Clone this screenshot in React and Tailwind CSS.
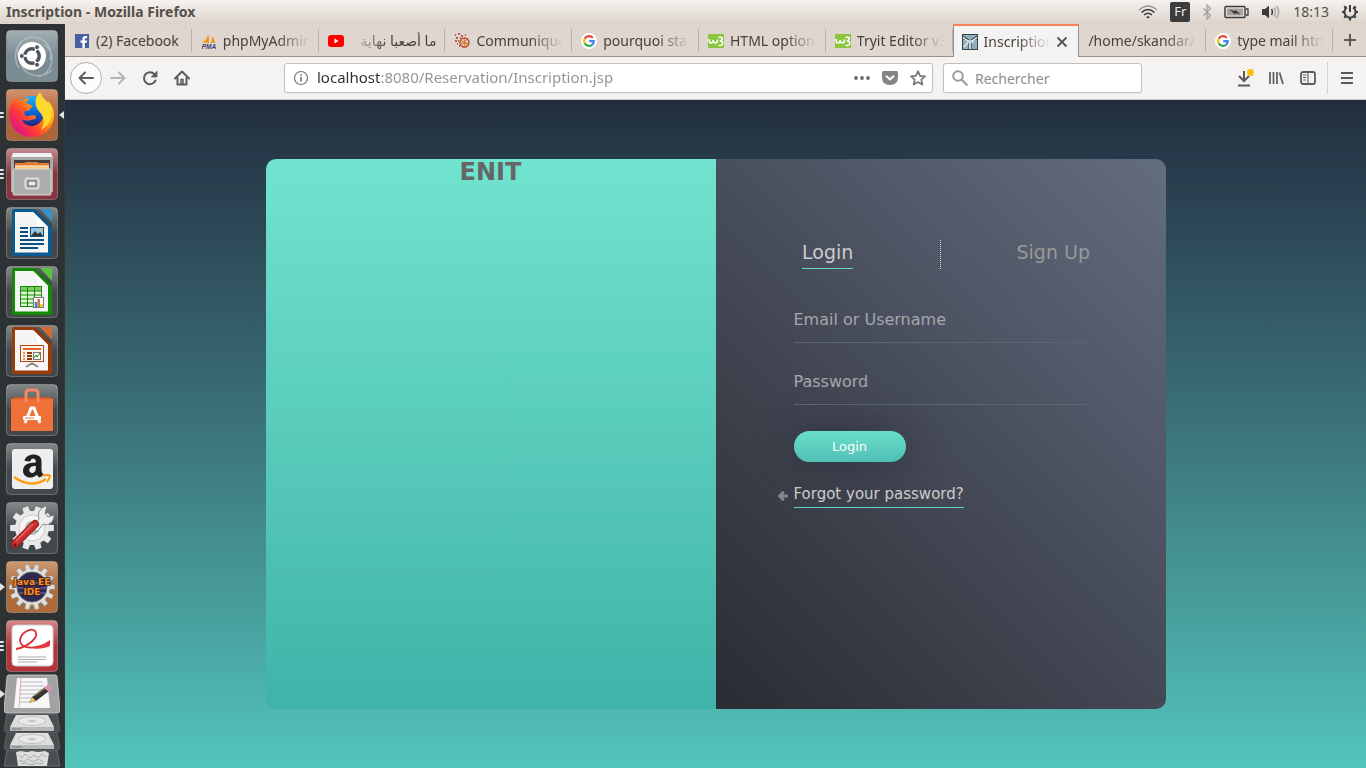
import React from "react";

/* ---------- Launcher icons ---------- */

const Tile = ({ from, to, children }) => {
  const id = React.useId();
  return (
    <svg viewBox="0 0 52 52" className="block size-[52px]" aria-hidden="true">
      <defs>
        <linearGradient id={id} x1="0" y1="0" x2="0" y2="1">
          <stop offset="0" stopColor={from} />
          <stop offset="0.5" stopColor={to} />
          <stop offset="1" stopColor={to} />
        </linearGradient>
      </defs>
      <rect x="0.5" y="0.5" width="51" height="51" rx="4" fill={`url(#${id})`} stroke="#fff" strokeOpacity="0.25" />
      {children}
    </svg>
  );
};

const gearPath = (cx, cy, r1, r2, n) => {
  const pts = [];
  for (let i = 0; i < n; i++) {
    const a = (i / n) * Math.PI * 2;
    const w = Math.PI / n;
    [[-0.62, r1], [-0.42, r2], [0.42, r2], [0.62, r1]].forEach(([k, r]) => {
      pts.push(`${(cx + Math.cos(a + k * w) * r).toFixed(2)} ${(cy + Math.sin(a + k * w) * r).toFixed(2)}`);
    });
  }
  return `M${pts.join("L")}Z`;
};

const DashIcon = () => (
  <Tile from="#a3b0b5" to="#7b8c93">
    <path d="M14 30C6 18 17 4 32 8c10 3 15 12 12 22M38 14c14 10 8 29-5 33M13 38C8 30 8 20 14 14M15 34c4 12 20 16 31 6" fill="none" stroke="#c2cccf" strokeOpacity="0.6" strokeWidth="1.6" />
    <circle cx="26" cy="26" r="14" fill="#fff" />
    <circle cx="26" cy="26" r="7.2" fill="none" stroke="#4b555a" strokeWidth="3.4" strokeDasharray="13 2.08" strokeDashoffset="6.5" />
    <g fill="#4b555a" stroke="#fff" strokeWidth="0.8">
      <circle cx="15.8" cy="26" r="2.4" />
      <circle cx="31" cy="17.2" r="2.4" />
      <circle cx="31" cy="34.8" r="2.4" />
    </g>
  </Tile>
);

const FirefoxIcon = () => (
  <Tile from="#d3936d" to="#b0643a">
    <defs>
      <linearGradient id="ffx" x1="0.95" y1="0.1" x2="0.1" y2="0.8">
        <stop offset="0" stopColor="#ffe226" />
        <stop offset="0.35" stopColor="#ff980e" />
        <stop offset="0.7" stopColor="#ff3b36" />
        <stop offset="1" stopColor="#e3108b" />
      </linearGradient>
      <linearGradient id="ffb" x1="0.5" y1="0" x2="0.5" y2="1">
        <stop offset="0" stopColor="#1ab4f8" />
        <stop offset="0.5" stopColor="#0868dd" />
        <stop offset="1" stopColor="#2b1a6b" />
      </linearGradient>
    </defs>
    <circle cx="26" cy="23" r="16" fill="url(#ffb)" />
    <path d="M10 8c-5 6-7 12-6.500 19C5 40 14 48 26 48c13 0 22-10 22-22 0-7-3-11-6-14-1 4-3 6-4 9 1 7-3 15-11 16-5 .5-10-2-11-7 3 2 6 2 9 1l4-1c2-1 1-4-2-4-3 0-4 2-7 1-2-1-2-4-1-5 2 0 4 0 5-1 0-2 1-2 3-4-2-1-4-2-7-3 1-2 2-4 4-5-4 0-7 1-9 3-3-1-4-2-5-4Z" fill="url(#ffx)" />
    <path d="M34 3c-5 5-6 12-2 18 4 5 9 10 3 20 10-5 14-16 8-26-3-4-7-6-9-12Z" fill="#ffd82e" />
  </Tile>
);

const FilesIcon = () => (
  <Tile from="#c08c92" to="#8a3340">
    <path d="M7 5h38l2 5H5Z" fill="#f1f1f1" />
    <rect x="5" y="9" width="42" height="35" rx="1" fill="#a9a9a9" />
    <rect x="8" y="12" width="36" height="10" fill="#443d3b" />
    <path d="M9 22v-7h9l2-1h12v1h11v7Z" fill="#e17a35" />
    <path d="M9 18h34v4H9Z" fill="#f6c77d" />
    <path d="M9 18h34" stroke="#fff2df" />
    <rect x="7" y="21" width="38" height="26" rx="1" fill="#adadad" stroke="#d8d8d8" />
    <rect x="19" y="30" width="14" height="11" rx="2" fill="#c6c6c6" stroke="#e6e6e6" />
    <rect x="22" y="33" width="8" height="5" fill="#eee" stroke="#4a4a4a" />
  </Tile>
);

const OfficeDoc = ({ dark, light, children }) => (
  <Tile from="#85898a" to="#43494b">
    <path d="M9 2h20l17 16v29a2 2 0 0 1-2 2H8a2 2 0 0 1-2-2V4a2 2 0 0 1 2-2Z" fill={dark} />
    <path d="M28 2h6l12 13v6Z" fill="#3a3f40" fillOpacity="0.55" />
    <path d="M34 2h11a1 1 0 0 1 1 1v12Z" fill={light} />
    <path d="M9 5h18l15 15v25.500H9Z" fill="#f5f5f5" />
    <path d="M27 5l15 15H31Z" fill="#fff" stroke="#d8d8d8" strokeWidth="0.5" />
    {children}
  </Tile>
);

const WriterIcon = () => (
  <OfficeDoc dark="#0b5a90" light="#3b8fc4">
    <path d="M14 21h8M14 25h8M14 29h8M14 33h24M14 37h24M14 41h18" stroke="#0b4f80" strokeWidth="2" />
    <rect x="24.500" y="20.500" width="13" height="9" fill="#90c8ee" stroke="#0b4f80" />
    <path d="M25 29l4-5 3 3 2-2 3 4Z" fill="#333" />
    <circle cx="35" cy="23" r="1.400" fill="#f0c62e" />
  </OfficeDoc>
);

const CalcIcon = () => (
  <OfficeDoc dark="#178a05" light="#56c43c">
    <rect x="14.500" y="20.500" width="21" height="20" fill="#dff5d5" stroke="#178a05" />
    <rect x="15" y="21" width="20" height="4" fill="#7ecb66" />
    <path d="M14 25h22M14 29h22M14 33h22M14 37h22M21.500 20v21M28.500 20v21" stroke="#178a05" />
    <rect x="27.500" y="31.500" width="10" height="10" fill="#fff" stroke="#777" />
    <path d="M30 41v-5" stroke="#1c8bd0" strokeWidth="2.500" />
    <path d="M32.700 41v-8" stroke="#e0702a" strokeWidth="2.500" />
    <path d="M35.500 41v-3" stroke="#eec31f" strokeWidth="2.500" />
  </OfficeDoc>
);

const ImpressIcon = () => (
  <OfficeDoc dark="#9a3c0a" light="#d06a36">
    <rect x="14.500" y="20.500" width="23" height="16" fill="#fff2e8" stroke="#b24a12" />
    <path d="M17 24h18" stroke="#dc6a2c" strokeWidth="2" />
    <path d="M17 28h2M17 31h2M17 34h2" stroke="#dc9a6c" strokeWidth="2" />
    <path d="M21 28h5M21 31h5M21 34h5" stroke="#923707" strokeWidth="2" />
    <rect x="27.500" y="27.500" width="7" height="7" fill="#fff" stroke="#777" />
    <path d="M28 33l2-3 1 2 3-4" fill="none" stroke="#178a05" />
    <path d="M26 38v2M26 38l-6 4M26 38l6 4" stroke="#888" strokeWidth="2" />
  </OfficeDoc>
);

const SoftwareIcon = () => (
  <Tile from="#85898a" to="#43494b">
    <path d="M6 15l3-2h35l3 2v4H6Z" fill="#cf5a30" />
    <rect x="5" y="15" width="42" height="32" fill="#ee7138" />
    <path d="M20 18V9q0-3 3-3h6q3 0 3 3v9" fill="none" stroke="#f08b62" strokeWidth="3" />
    <path d="M19 39l6-15h3l6 15" fill="none" stroke="#fff" strokeWidth="3" />
    <rect x="17" y="32" width="18" height="4" rx="1" fill="#fff" />
    <path d="M19 34h9" stroke="#ee7138" />
  </Tile>
);

const AmazonIcon = () => (
  <Tile from="#85898a" to="#43494b">
    <rect x="6" y="6" width="41" height="40" rx="3" fill="#eee" />
    <path d="M18.500 18C19.500 9.500 35.500 9 35.500 18V27.500Q35.500 29.500 38 32L33.500 34.500Q31.500 33.500 30.800 31.800C26 37 17 34.500 17 28C17 21.500 22.500 19.600 29.800 19.500C30.300 14.500 25 14.500 24.300 18.500ZM29.800 23C25.500 23 23.300 24.500 23.300 27.300C23.300 31 29.800 31.500 29.800 25Z" fill="#222" />
    <path d="M8 34q17 12 32 2" fill="none" stroke="#ff9900" strokeWidth="2.200" />
    <path d="M36 33q6-2 8 0-1 4-3 6" fill="none" stroke="#ff9900" strokeWidth="1.800" />
  </Tile>
);

const SettingsIcon = () => (
  <Tile from="#85898a" to="#43494b">
    <path d={gearPath(26, 26, 17, 22, 10)} fill="#e8e8e8" />
    <circle cx="26" cy="26" r="13" fill="#f5f5f5" stroke="#c8c8c8" />
    <circle cx="26" cy="26" r="7" fill="#b0b4b5" />
    <path d="M27 25l6-8c-2-7 2-12 8-13l-2 7 3 4 6-2c0 7-5 11-11 9l-6 8Z" fill="#eceeee" stroke="#777" strokeWidth="0.8" />
    <path d="M9 42l20-20" stroke="#981a1a" strokeWidth="8" strokeLinecap="round" />
    <path d="M9 42l20-20" stroke="#cc2f2f" strokeWidth="6" strokeLinecap="round" />
    <path d="M10 39l17-17" stroke="#ec6a62" strokeWidth="1.500" />
    <circle cx="9" cy="43" r="1.400" fill="#5f1010" />
  </Tile>
);

const EclipseIcon = () => (
  <Tile from="#cf9a70" to="#ad6b3a">
    <path d={gearPath(26, 26, 18, 23, 14)} fill="#dedede" stroke="#8b8b8b" strokeWidth="0.7" />
    <circle cx="26" cy="26" r="15" fill="#2e2852" stroke="#666" />
    <path d="M12 22h28M11 27h30M13 32h26" stroke="#61599c" strokeWidth="1.500" />
    <g fontFamily="DejaVu Sans, sans-serif" fontWeight="700" fontSize="9" fill="#ff8e28" stroke="#3a1f10" strokeWidth="1.600" paintOrder="stroke" textAnchor="middle">
      <text x="26" y="24">Java EE</text>
      <text x="26" y="34">IDE</text>
    </g>
  </Tile>
);

const ReaderIcon = () => (
  <Tile from="#d58787" to="#b5343b">
    <rect x="6" y="5" width="41" height="41" rx="4" fill="#fff" stroke="#ccc" />
    <path d="M10 29C22 27 34 17 29 11C25 7 14 13 14 21C15 29 29 30 44 22" fill="none" stroke="#d92f35" strokeWidth="1.800" />
    <path d="M22 27c8 1 15-2 22-7v6c-7 3-14 4-22 1Z" fill="#e23c41" />
    <path d="M12 37h28M12 39.500h28M12 42h19" stroke="#aaa" />
  </Tile>
);

const GeditIcon = () => (
  <svg viewBox="0 0 56 40" className="block h-[40px] w-[56px]" aria-hidden="true">
    <path d="M5 1h46q2 0 2 2l3 33q0 3-3 3H3q-3 0-3-3L3 3q0-2 2-2Z" fill="#a2a2a2" stroke="#c2c2c2" />
    <path d="M13 4h30l3 30H10Z" fill="#f6f6f6" />
    <path d="M16 8h23M16 12h24M15 16h25M15 20h20M15 24h16M15 28h12" stroke="#b9bcc8" />
    <path d="M17 4l-2 30" stroke="#efaaaa" />
    <path d="M25 29l3-6 13-10 4 4-13 10Z" fill="#343434" />
    <path d="M25 29l3-6 4 4Z" fill="#e3c257" />
    <path d="M30 22l11-8" stroke="#8b8b45" strokeWidth="1.500" />
    <path d="M40 14l3-3q4 0 5 4l-3 3Z" fill="#dc8fb8" />
  </svg>
);

const DriveIcon = () => (
  <svg viewBox="0 0 56 18" className="block h-[18px] w-[56px]" aria-hidden="true">
    <path d="M3 0h50l3 17H0Z" fill="#4a4f50" stroke="#6f7474" strokeWidth="0.7" />
    <path d="M12 1h32l6 12H6Z" fill="#dedede" />
    <ellipse cx="28" cy="7" rx="14" ry="4.500" fill="#e8e8e8" stroke="#b5b5b5" strokeWidth="0.7" />
    <ellipse cx="28" cy="7" rx="4" ry="1.200" fill="#c5c5c5" />
    <path d="M6 13h44v4H6Z" fill="#b6b8b8" />
    <path d="M8 15h10" stroke="#777" />
  </svg>
);

const TrashIcon = () => (
  <svg viewBox="0 0 56 18" className="block h-[18px] w-[56px]" aria-hidden="true">
    <path d="M3 0h50l3 16H0Z" fill="#4a4e50" stroke="#7b8080" strokeWidth="0.7" />
    <path d="M12 2l5-1 6 1 5-1 6 1 7-1 4 2-2 13H14Z" fill="#dcdedc" />
    <path d="M14 5l4 3 3-4 5 4 4-3 4 3 4-4 4 3M15 10l5 2 4-3 5 3 5-3 6 3M17 14l5-1 5 2 6-2 6 1" fill="none" stroke="#a3a8a4" strokeWidth="0.9" />
  </svg>
);

const Pips = ({ count }) => (
  <span className="flex w-1 flex-col gap-0.5" aria-hidden="true">
    {Array.from({ length: count }, (_, i) => (
      <span key={i} className="h-0.5 w-full rounded-r-full bg-[#e6e6e6]" />
    ))}
  </span>
);

const Arrow = ({ left }) => (
  <svg viewBox="0 0 5 8" className="h-2 w-[5px]" aria-hidden="true">
    <path d={left ? "M5 0v8L0 4Z" : "M0 0v8l5-4Z"} fill="#e2e2e2" />
  </svg>
);

const launchers = [
  { name: "Dash", icon: <DashIcon /> },
  { name: "Firefox", icon: <FirefoxIcon />, mark: <Pips count={2} />, active: true },
  { name: "Files", icon: <FilesIcon />, mark: <Pips count={3} /> },
  { name: "Writer", icon: <WriterIcon /> },
  { name: "Calc", icon: <CalcIcon /> },
  { name: "Impress", icon: <ImpressIcon /> },
  { name: "Software", icon: <SoftwareIcon /> },
  { name: "Amazon", icon: <AmazonIcon /> },
  { name: "Settings", icon: <SettingsIcon /> },
  { name: "Eclipse", icon: <EclipseIcon />, mark: <Arrow /> },
  { name: "Reader", icon: <ReaderIcon />, mark: <Pips count={3} /> },
];

function Launcher() {
  return (
    <nav aria-label="Launcher" className="flex w-[65px] shrink-0 flex-col overflow-hidden border-r border-[#3c3532] bg-[#2d3335] pt-1.5">
      <div className="flex flex-col gap-[7px]">
        {launchers.map((l) => (
          <div key={l.name} className="flex items-center">
            <span className="w-1.5 shrink-0">{l.mark}</span>
            <button aria-label={l.name} className="shrink-0">{l.icon}</button>
            <span className="ml-px">{l.active && <Arrow left />}</span>
          </div>
        ))}
      </div>
      <div className="mt-0.5 flex items-center">
        <span className="w-1 shrink-0"><Arrow /></span>
        <button aria-label="Text editor" className="shrink-0"><GeditIcon /></button>
      </div>
      <button aria-label="Drive" className="ml-1"><DriveIcon /></button>
      <button aria-label="Second drive" className="ml-1"><DriveIcon /></button>
      <button aria-label="Trash" className="ml-1"><TrashIcon /></button>
    </nav>
  );
}

/* ---------- System bar ---------- */

function SystemBar() {
  return (
    <header className="flex h-6 shrink-0 items-center justify-between bg-linear-to-b from-[#f5f2ef] to-[#dcd3cb] pl-1.5 pr-[7px] text-[#55504a]">
      <h1 className="text-sm font-bold leading-6">Inscription - Mozilla Firefox</h1>
      <div className="flex items-center text-[#55504a]">
        <svg viewBox="0 0 20 14" className="mr-3 h-3.5 w-5" fill="none" stroke="#3c3c3c" strokeWidth="1.500" aria-label="Wi-Fi">
          <path d="M1 5q9-8 18 0" stroke="#9a9692" />
          <path d="M3.500 7.500q6.500-6 13 0M6 10q4-3.500 8 0" />
          <path d="M8 12q2-1.500 4 0l-2 1.500Z" fill="#3c3c3c" stroke="none" />
        </svg>
        <span className="mr-3 flex size-5 items-center justify-center rounded-xs bg-[#3c3c3c] text-[13px] text-[#efebe7]">Fr</span>
        <svg viewBox="0 0 10 16" className="mr-3 h-4 w-2.5" fill="none" stroke="#a5a19d" strokeWidth="1.300" aria-label="Bluetooth">
          <path d="M1.500 4.500l7 7L5 15V1l3.500 3.500-7 7" />
        </svg>
        <svg viewBox="0 0 25 14" className="mr-3 h-3.5 w-[25px]" aria-label="Battery">
          <rect x="1" y="1.500" width="20" height="11" rx="1" fill="#e6e2de" stroke="#3c3c3c" strokeWidth="1.500" />
          <rect x="3" y="3.500" width="16" height="7" fill="#a5a29e" />
          <path d="M22 4h2v6h-2" fill="none" stroke="#3c3c3c" strokeWidth="1.300" />
          <path d="M5.500 4.500l6 2-.5-2 5.500 5-5.500-1.500.5 2Z" fill="#333" />
        </svg>
        <svg viewBox="0 0 20 14" className="mr-3 h-3.5 w-5" fill="none" strokeWidth="1.400" aria-label="Volume">
          <path d="M1 4.500q0-.5.5-.5H4l4-3.500v13L4 10H1.500q-.5 0-.5-.5Z" fill="#3c3c3c" />
          <path d="M10.500 4q2 3 0 6" stroke="#3c3c3c" />
          <path d="M13 2.500q3 4.500 0 9M15.500 1q4.500 6 0 12" stroke="#a5a19d" />
        </svg>
        <time className="mr-3 text-sm leading-6">18:13</time>
        <svg viewBox="0 0 18 18" className="size-[18px]" fill="none" stroke="#3c3c3c" aria-label="Session">
          <path d="M6 4.300a5.600 5.600 0 1 0 6 0" strokeWidth="2" />
          <path d="M9 2v7" strokeWidth="2" />
          <path d="M1 9h2M15 9h2M9 15v2.500M3.300 14.700l1.400-1.400M14.700 14.700l-1.400-1.400M3.300 3.300l1.400 1.400M14.700 3.300l-1.400 1.400" strokeWidth="2.200" />
        </svg>
      </div>
    </header>
  );
}

/* ---------- Favicons ---------- */

const FacebookFav = () => (
  <svg viewBox="0 0 16 16" className="size-4 shrink-0" aria-hidden="true">
    <rect x="1" y="1" width="14" height="14" fill="#4460a0" />
    <path d="M10.800 15V9.700h1.900l.3-2.200h-2.200V6.300c0-.7.2-1 1-1h1.300V3.200C12.800 3.100 12 3 11.300 3 9.500 3 8.400 4 8.400 6v1.500H6.500v2.200h1.900V15Z" fill="#fff" />
  </svg>
);

const PmaFav = () => (
  <svg viewBox="0 0 16 16" className="size-4 shrink-0" aria-hidden="true">
    <path d="M7 1q2 4 1 9H2q4-3 5-9ZM11 3q3 3 3 7H9.500q2-3 1.500-7Z" fill="#f7941d" />
    <path d="M4 5v5H1Z" fill="#f6b25f" />
    <text x="8" y="15.500" textAnchor="middle" fontFamily="Liberation Sans, sans-serif" fontSize="6.500" fontWeight="700" fontStyle="italic" fill="#3a3f70">PMA</text>
  </svg>
);

const YoutubeFav = () => (
  <svg viewBox="0 0 16 16" className="size-4 shrink-0" aria-hidden="true">
    <rect x="0" y="2" width="16" height="12" rx="3" fill="#f00" />
    <path d="M6.500 5.500v5l4-2.500Z" fill="#fff" />
  </svg>
);

const SwirlFav = () => (
  <svg viewBox="0 0 16 16" className="size-4 shrink-0" fill="none" aria-hidden="true">
    <circle cx="10.500" cy="9.500" r="4.500" stroke="#b83a20" strokeWidth="1.300" />
    <path d="M7 7l7 5M8 12l5-6M6 10h9M10 5l1 9" stroke="#d8742a" />
    <path d="M1 2h1M4 1h2M7 3h2M2 5h2M6 5h1M1 8h2M4 8h1M3 11h1M11 2h1M5 13h1" stroke="#a53226" strokeWidth="1.500" />
  </svg>
);

const GoogleFav = () => (
  <svg viewBox="0 0 16 16" className="size-4 shrink-0" aria-hidden="true">
    <circle cx="8" cy="8" r="8" fill="#fff" />
    <g fill="none" strokeWidth="2.200">
      <path d="M11.800 4.900A4.900 4.900 0 0 0 3.700 5.700" stroke="#ea4335" />
      <path d="M3.700 5.700a4.900 4.900 0 0 0 0 4.600" stroke="#fbbc05" />
      <path d="M3.700 10.300a4.900 4.900 0 0 0 7.400 1.500" stroke="#34a853" />
      <path d="M11.100 11.800A4.900 4.900 0 0 0 12.800 8.100H8.200" stroke="#4285f4" />
    </g>
  </svg>
);

const W3Fav = () => (
  <svg viewBox="0 0 16 16" className="size-4 shrink-0" aria-hidden="true">
    <rect y="1" width="16" height="14" fill="#8ac53f" />
    <path d="M1 6q0 4 2 4 2 0 2.200-3Q5.500 10 7.500 10q2 0 2-3.500" fill="none" stroke="#fff" strokeWidth="1.600" />
    <path d="M10.500 4.500q3.800-1 3.800 1.200 0 1.800-2.500 2 2.900.2 2.900 2.500 0 2.800-4.200 2" fill="none" stroke="#fff" strokeWidth="1.500" />
  </svg>
);

const TomcatFav = () => (
  <svg viewBox="0 0 16 16" className="size-4 shrink-0" aria-hidden="true">
    <rect x="0.500" y="0.500" width="15" height="15" fill="#93adba" stroke="#31454f" />
    <path d="M1 2l6 4M15 2L9 6M1 5h4M11 5h4" stroke="#26343d" fill="none" />
    <path d="M1 3.500l5 3.500M15 3.500L10 7M6 7h4l1.500 2M8 8v7M6.500 8L2 13" stroke="#eef4f6" strokeWidth="1.200" fill="none" />
    <path d="M6.500 9v6M9.500 9v6" stroke="#4a606c" strokeWidth="0.8" fill="none" />
  </svg>
);

/* ---------- Browser chrome ---------- */

const tabs = [
  { icon: <FacebookFav />, title: "(2) Facebook", fits: true },
  { icon: <PmaFav />, title: "phpMyAdmin" },
  { icon: <YoutubeFav />, title: "ما أصعبا نهاية", rtl: true },
  { icon: <SwirlFav />, title: "Communiqués" },
  { icon: <GoogleFav />, title: "pourquoi static" },
  { icon: <W3Fav />, title: "HTML option tag" },
  { icon: <W3Fav />, title: "Tryit Editor v3.5" },
  { icon: <TomcatFav />, title: "Inscription", active: true },
  { title: "/home/skandar/" },
  { icon: <GoogleFav />, title: "type mail html" },
];

function Tab({ icon, title, rtl, fits, active }) {
  const fade = rtl
    ? "mask-[linear-gradient(to_left,#000_55%,transparent)]"
    : fits
      ? ""
      : "mask-[linear-gradient(to_right,#000_calc(100%-32px),transparent)]";
  return (
    <div
      className={
        active
          ? "flex min-w-0 items-center border-x border-t-2 border-x-[#98918c] border-t-[#f58259] bg-[#f4f3f1] pl-2 pr-2.5"
          : "flex min-w-0 items-center border-b border-[#98918c] pb-1 pt-[5px]"
      }
    >
      <button
        role="tab"
        aria-selected={!!active}
        className={
          active
            ? "flex min-w-0 flex-1 items-center gap-1.5"
            : "flex h-full min-w-0 flex-1 items-center gap-1.5 border-r border-[#b9b1ab] pl-[9px] pr-2"
        }
      >
        {icon}
        <span dir={rtl ? "rtl" : "ltr"} className={`min-w-0 flex-1 overflow-hidden whitespace-nowrap text-start leading-5 ${fade}`}>
          {title}
        </span>
      </button>
      {active && (
        <button aria-label="Close tab" className="ml-1.5">
          <svg viewBox="0 0 12 12" className="size-3" stroke="#555" strokeWidth="1.800" aria-hidden="true">
            <path d="M1.500 1.500l9 9M10.500 1.500l-9 9" />
          </svg>
        </button>
      )}
    </div>
  );
}

const Icon = ({ children, className = "" }) => (
  <svg viewBox="0 0 16 16" className={`size-4 ${className}`} fill="none" stroke="#5c5b59" strokeWidth="2" strokeLinecap="round" strokeLinejoin="round" aria-hidden="true">
    {children}
  </svg>
);

function BrowserChrome() {
  return (
    <div className="shrink-0 text-sm text-[#46423e]">
      <div className="flex h-[33px] bg-[#dfd6cf]">
        <div role="tablist" className="grid min-w-0 flex-1 grid-cols-10">
          {tabs.map((t) => (
            <Tab key={t.title} {...t} />
          ))}
        </div>
        <button aria-label="New tab" className="flex w-[33px] shrink-0 items-center justify-center border-b border-[#98918c]">
          <Icon><path d="M8 2v12M2 8h12" strokeLinecap="butt" /></Icon>
        </button>
      </div>
      <div className="flex h-[43px] items-center border-b border-[#c9c6c3] bg-[#f4f3f1] pl-[5px]">
        <button aria-label="Back" className="flex size-8 items-center justify-center rounded-full border border-[#b5b2af] bg-[#fcfcfc]">
          <Icon><path d="M15 8H1.500M7 2.500L1.500 8 7 13.500" /></Icon>
        </button>
        <button aria-label="Forward" className="ml-2" disabled>
          <Icon className="opacity-40"><path d="M1 8h13.500M9 2.500L14.500 8 9 13.500" /></Icon>
        </button>
        <button aria-label="Reload" className="ml-4">
          <Icon><path d="M13.500 10.500A6 6 0 1 1 12.300 4" /><path d="M15 1.500v5.500H9.500Z" fill="#5c5b59" strokeWidth="0.800" /></Icon>
        </button>
        <button aria-label="Home" className="ml-4">
          <Icon><path d="M1 8.500L8 1.500l7 7M3.500 8v6.500h9V8" /><path d="M7 14v-4.500h2V14" strokeWidth="1.500" /></Icon>
        </button>
        <div className="ml-[94px] flex h-[30px] flex-1 items-center rounded-[3px] border border-[#c3c0bd] bg-white pl-2 pr-1.5 shadow-xs">
          <svg viewBox="0 0 16 16" className="size-4" fill="none" stroke="#77757a" aria-hidden="true">
            <circle cx="8" cy="8" r="6.500" strokeWidth="1.200" />
            <path d="M8 7v4.500M8 4.300v1.500" strokeWidth="1.700" />
          </svg>
          <input
            aria-label="Address"
            defaultValue="localhost:8080/Reservation/Inscription.jsp"
            className="ml-2 min-w-0 flex-1 bg-[linear-gradient(90deg,#2e2e2e_64px,#929292_64px)] bg-clip-text text-[15px] text-transparent outline-none"
          />
          <button aria-label="Page actions">
            <svg viewBox="0 0 16 16" className="size-4" fill="#6d6c6b" aria-hidden="true">
              <circle cx="2" cy="8" r="1.900" /><circle cx="8" cy="8" r="1.900" /><circle cx="14" cy="8" r="1.900" />
            </svg>
          </button>
          <button aria-label="Save to Pocket" className="ml-3">
            <svg viewBox="0 0 16 16" className="size-4" aria-hidden="true">
              <path d="M1.500 1h13Q16 1 16 2.500V7q0 8-8 8T0 7V2.500Q0 1 1.500 1Z" fill="#858483" />
              <path d="M4.500 6.200L8 9.500l3.500-3.300" fill="none" stroke="#fff" strokeWidth="2" strokeLinecap="round" strokeLinejoin="round" />
            </svg>
          </button>
          <button aria-label="Bookmark" className="ml-3">
            <Icon><path d="M8 1.200l2.100 4.600 4.900.5-3.700 3.300 1.100 5L8 12l-4.400 2.600 1.100-5L1 6.300l4.900-.5Z" strokeWidth="1.700" stroke="#777" /></Icon>
          </button>
        </div>
        <div className="ml-2.5 flex h-[30px] w-[199px] items-center rounded-[3px] border border-[#c3c0bd] bg-white pl-2 shadow-xs">
          <Icon><circle cx="6" cy="6" r="4.800" stroke="#9b9999" /><path d="M9.800 9.800l5 5" stroke="#9b9999" /></Icon>
          <input aria-label="Search" placeholder="Rechercher" className="ml-[7px] min-w-0 flex-1 pt-px outline-none placeholder:text-[#8f8d8b]" />
        </div>
        <button aria-label="Downloads" className="ml-[94px]">
          <svg viewBox="0 0 18 18" className="size-[18px]" fill="none" stroke="#5c5b59" strokeWidth="2" aria-hidden="true">
            <path d="M8 2v10M3 7l5 5 5-5M2 16.500h12" />
            <circle cx="14.500" cy="3.500" r="3.400" fill="#ffbf00" stroke="none" />
          </svg>
        </button>
        <button aria-label="Library" className="ml-3.5">
          <Icon><path d="M2 2v12M5.500 2v12M9 2v12M11.500 2.500L15 14" strokeWidth="1.700" strokeLinecap="butt" /></Icon>
        </button>
        <button aria-label="Sidebars" className="ml-4">
          <Icon><rect x="1" y="2" width="14" height="12" rx="2" strokeWidth="1.800" /><path d="M8 2v12M3.500 5h2.500M3.500 7.500h2.500M3.500 10h2" strokeWidth="1.100" /></Icon>
        </button>
        <span className="ml-[11px] h-8 w-px bg-[#d5d2cf]" />
        <button aria-label="Menu" className="mx-[11px]">
          <Icon><path d="M2 3h12M2 8h12M2 13h12" strokeLinecap="butt" /></Icon>
        </button>
      </div>
    </div>
  );
}

/* ---------- Page ---------- */

function Field({ id, label, type }) {
  return (
    <div>
      <label htmlFor={id} className="sr-only">{label}</label>
      <input
        id={id}
        type={type}
        placeholder={label}
        className="block h-[34px] w-full border-b border-[#596672] pb-[13px] text-base leading-5 text-[#ccc] outline-none placeholder:text-[#a5a7ab]"
      />
    </div>
  );
}

function LoginPage() {
  return (
    <main className="flex flex-1 items-center justify-center bg-linear-to-b from-[#222e40] to-[#52c5bb] font-['DejaVu_Sans',sans-serif]">
      <div className="flex min-h-[550px] w-full max-w-[900px] overflow-hidden rounded-[10px]">
        <section className="flex-1 bg-linear-to-b from-[#70e4ce] to-[#3fb3a8]">
          <h2 className="text-center text-2xl font-bold leading-[26px] text-[#666]">ENIT</h2>
        </section>
        <section className="flex-1 bg-[linear-gradient(45deg,#2a2c33,#464b58_50%,#636d80)] pt-[81px]">
          <div role="tablist" className="flex h-[29px] text-[19px] leading-6">
            <div className="flex flex-1 justify-center">
              <button role="tab" aria-selected="true" className="border-b border-[#5fd6c3] pb-1 text-[#ccc]">Login</button>
            </div>
            <div className="border-l border-dotted border-[#d5d7da]" />
            <div className="flex flex-1 justify-center">
              <button role="tab" aria-selected="false" className="pb-[5px] text-[#999]">Sign Up</button>
            </div>
          </div>
          <form className="mt-10 px-[78px]" onSubmit={(e) => e.preventDefault()}>
            <div className="flex flex-col gap-7">
              <Field id="user" label="Email or Username" type="text" />
              <Field id="pass" label="Password" type="password" />
            </div>
            <button className="mt-[26px] block h-[31px] w-28 rounded-full bg-linear-to-b from-[#6adfca] to-[#50bfb5] text-[13px] text-white shadow-[0_0_40px_rgba(20,25,35,0.4)]">
              Login
            </button>
            <div className="-ml-4 mt-[22px] flex items-center gap-1.5">
              <svg viewBox="0 0 10 10" className="size-2.5" fill="none" stroke="#82868f" strokeWidth="2.800" aria-hidden="true">
                <path d="M10 5H2M5.800 0.700L1.500 5l4.300 4.300" />
              </svg>
              <a href="#forgot" className="border-b border-[#5fd6c3] pb-[3px] text-[15px] leading-5 text-[#ccc]">Forgot your password?</a>
            </div>
          </form>
        </section>
      </div>
    </main>
  );
}

export default function App() {
  return (
    <div className="flex h-screen flex-col overflow-hidden font-['Noto_Sans','DejaVu_Sans',sans-serif]">
      <SystemBar />
      <div className="flex min-h-0 flex-1">
        <Launcher />
        <div className="flex min-w-0 flex-1 flex-col">
          <BrowserChrome />
          <LoginPage />
        </div>
      </div>
    </div>
  );
}
